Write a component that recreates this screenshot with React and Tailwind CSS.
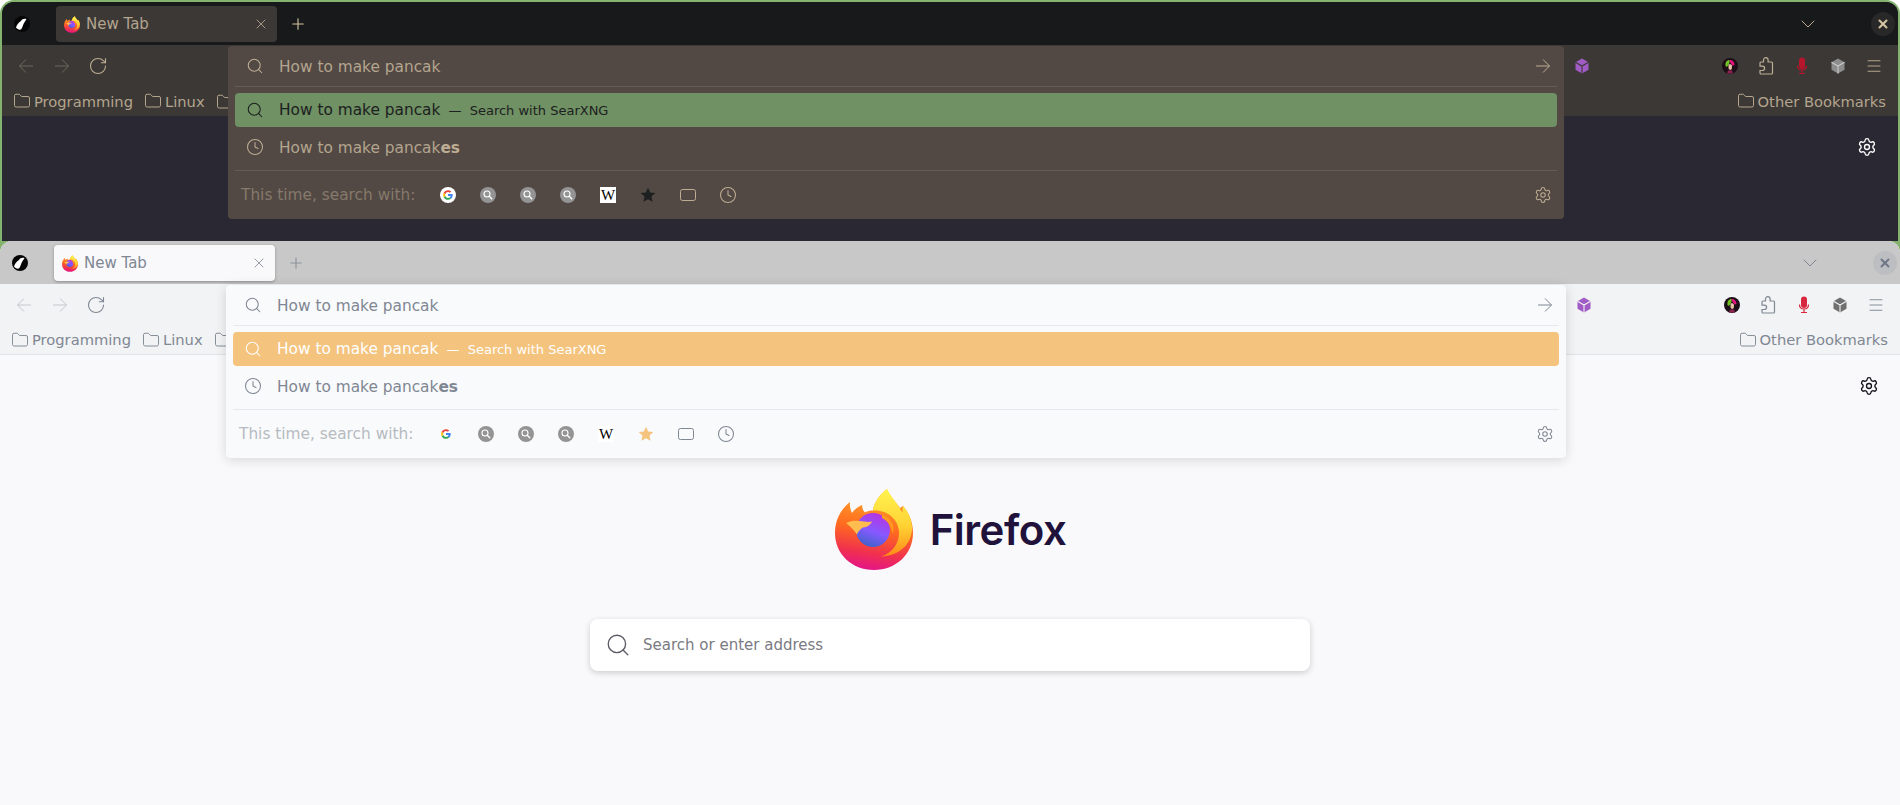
import { ChevronDown, Clock, Folder, Menu, Plus, RotateCw, Search, Settings, X } from "lucide-react";

const darkTheme = {
  dark: true,
  window: "h-[239px] mx-[2px] mt-[2px] bg-[#2a2833]",
  tabBar: "bg-[#18191b]",
  tab: "bg-[#3c3836] text-[#b3a58e]",
  tabIcon: "text-[#bdae93]",
  plus: "text-[#d5c4a1]",
  chevron: "text-[#bdae93]",
  close: "bg-[#282828] text-[#d5c4a1]",
  toolbar: "bg-[#3c3836]",
  navDim: "text-[#6e665c]",
  navIcon: "text-[#bdae93]",
  bookmark: "text-[#b3a58e]",
  bookmarkIcon: "text-[#bdae93]",
  bookmarkBar: "",
  gear: "text-white",
  panel: "bg-[#524844]",
  sep: "bg-[#665c54]",
  text: "text-[#b3a58e]",
  strong: "text-[#bdae93]",
  icon: "text-[#bdae93]",
  selected: "bg-[#6f9163] text-[#1d2021]",
  selectedIcon: "text-[#1d2021]",
  footer: "text-[#857a6b]",
  star: "#1d2021",
  puzzle: "text-[#bdae93]",
  cube: { fill: "#8d8d8d", line: "#c9c9c9" },
  mic: "#b5162c",
};

const lightTheme = {
  dark: false,
  window: "h-[564px] bg-[#f9f9fb]",
  tabBar: "bg-[#c8c8c8]",
  tab: "bg-[#f9f9fb] text-[#7f8793] shadow-[0_1px_3px_rgba(0,0,0,0.3)]",
  tabIcon: "text-[#7f8793]",
  plus: "text-[#8b929c]",
  chevron: "text-[#7f8793]",
  close: "bg-[#bcbec2] text-[#6f7988]",
  toolbar: "bg-[#f2f3f5]",
  navDim: "text-[#c3c7cd]",
  navIcon: "text-[#7f8793]",
  bookmark: "text-[#7f8793]",
  bookmarkIcon: "text-[#7f8793]",
  bookmarkBar: "border-b border-[#e1e3e6]",
  gear: "text-[#15141a]",
  panel: "bg-[#f9fafc] shadow-[0_2px_12px_rgba(0,0,0,0.14)]",
  sep: "bg-[#e6e8eb]",
  text: "text-[#7f8793]",
  strong: "text-[#7f8793]",
  icon: "text-[#7f8793]",
  selected: "bg-[#f4c37d] text-white",
  selectedIcon: "text-white",
  footer: "text-[#b6bac1]",
  star: "#f4c37d",
  puzzle: "text-[#7f8793]",
  cube: { fill: "#6f6f6f", line: "#f2f3f5" },
  mic: "#d7263d",
};

function Arrow({ left, className }) {
  return (
    <svg width="16" height="16" viewBox="0 0 16 16" fill="none" stroke="currentColor" strokeWidth="1" className={className}>
      {left ? <path d="M15 8H1.5M8 1.5 1.5 8 8 14.5" /> : <path d="M1 8h13.5M8 1.5 14.5 8 8 14.5" />}
    </svg>
  );
}

function Penguin() {
  return (
    <svg width="16" height="16" viewBox="0 0 16 16" className="shrink-0">
      <circle cx="8" cy="8" r="8" fill="#050505" />
      <path d="M12.500 3.200C10.500 2.400 8 3 7 5 4.500 6.500 2.500 9 2 11.500c1 1.500 3 2.500 5 2 1.500-2 2-4.500 3-6.500.7-1.200 1.500-2.500 2.500-3.800Z" fill="#fff" />
    </svg>
  );
}

function FirefoxMark({ id, size, height }) {
  return (
    <svg width={size} height={height} viewBox="0 0 78 81" className="shrink-0">
      <defs>
        <linearGradient id={`${id}body`} x1="0.6" y1="0" x2="0.45" y2="1">
          <stop offset="0" stopColor="#ffb02e" />
          <stop offset="0.5" stopColor="#ff6a1f" />
          <stop offset="0.8" stopColor="#f0304f" />
          <stop offset="1" stopColor="#e31587" />
        </linearGradient>
        <linearGradient id={`${id}flame`} x1="0.5" y1="0" x2="0.5" y2="1">
          <stop offset="0" stopColor="#fff44f" />
          <stop offset="0.55" stopColor="#ffd234" />
          <stop offset="1" stopColor="#ff8a16" />
        </linearGradient>
        <linearGradient id={`${id}globe`} x1="0.7" y1="0" x2="0.35" y2="1">
          <stop offset="0" stopColor="#b833e1" />
          <stop offset="0.55" stopColor="#8659ff" />
          <stop offset="1" stopColor="#3f62c9" />
        </linearGradient>
      </defs>
      <path d="M15 13c-.5 4 .2 7.500 2 11 2.500-3.500 5.800-6.300 10-8 .2 3 1 5.500 3 7.500 2.500-1.500 5-2 8-2C39 14 44 6 52 0c2 7 8 12 13 19l3-2c6 7 10 16 10 27 0 21-17 37-39 37S0 65 0 44C0 31 6 20 15 13Z" fill={`url(#${id}body)`} />
      <path d="M52 0C44 6 39 14 38 21.500c14-1 25 8 26 21 .6 11-6 21-18 25 17-.5 30-11 31-27 .4-9-3.500-17-9-23.500l-.7 7C63 14.500 56 8 52 0Z" fill={`url(#${id}flame)`} />
      <circle cx="38" cy="41" r="17" fill={`url(#${id}globe)`} />
      <path d="M11 34c6-3 12-2.500 18-1.500 3 .5 6 .5 8 0-2 4-5 5.500-9 6-2.500 1.500-5 4-6 7C19 41 15 37 11 34Z" fill="#ffbd4f" />
      <path d="M47 26c5 1 9 5 11 10 .6 3 .6 6 0 9-1.500-7-5-13-11-16v-3Z" fill="#ff9a1f" />
    </svg>
  );
}

function CubeIcon({ fill, line }) {
  return (
    <svg width="16" height="16" viewBox="0 0 16 16" className="shrink-0">
      <path d="M8 .5 14.500 4.200v7.600L8 15.500 1.500 11.800V4.200Z" fill={fill} />
      <path d="M1.500 4.200 8 8l6.500-3.800M8 8v7.500" fill="none" stroke={line} strokeWidth="1.100" />
    </svg>
  );
}

function PuzzleIcon({ className }) {
  return (
    <svg width="16" height="18" viewBox="0 0 16 18" fill="none" stroke="currentColor" strokeWidth="1.200" className={`shrink-0 ${className}`}>
      <path d="M5.500 5V3a2.300 2.300 0 0 1 4.600 0v2h3.400a1 1 0 0 1 1 1v10a1 1 0 0 1-1 1H3a1 1 0 0 1-1-1v-2.500h2.400a2.200 2.200 0 0 0 0-4.400H2V6a1 1 0 0 1 1-1Z" />
    </svg>
  );
}

function Avatar() {
  return (
    <svg width="16" height="18" viewBox="0 0 16 18" className="shrink-0">
      <circle cx="8" cy="9" r="8" fill="#1d0f18" />
      <path d="M3.500 9C3 5 5 3 7.500 3c.5 1.500 0 3.500-1.200 5L5 10Z" fill="#6ec21f" />
      <path d="M7.500 3c3 0 5 2 5 5l-2 .5c-1-1.500-2.500-3-3-5.500Z" fill="#e6127d" />
      <path d="M6.500 7.500c1.500-.5 3 0 3.500 1l-.2 3.500-1.800 1.300-1.500-1.800Z" fill="#e9bfa6" />
      <path d="M6 13.500h4l1 3H5Z" fill="#8c2350" />
    </svg>
  );
}

function MicIcon({ color }) {
  return (
    <svg width="16" height="18" viewBox="0 0 16 18" className="shrink-0">
      <rect x="5" y="0.500" width="6" height="11.500" rx="3" fill={color} />
      <path d="M3.500 8.500C3.500 11.500 5.500 13 8 13s4.500-1.500 4.500-4.500M8 13v3M5 16.500h6" fill="none" stroke={color} strokeWidth="1.200" />
    </svg>
  );
}

function GoogleIcon({ dark }) {
  return (
    <svg width="16" height="16" viewBox="0 0 16 16" className="shrink-0">
      {dark && <circle cx="8" cy="8" r="8" fill="#fff" />}
      <path d="M12.700 8.100c0-.3 0-.7-.1-1H8v1.900h2.600c-.1.600-.5 1.200-1 1.500l1.600 1.200c1-.9 1.500-2.200 1.500-3.600Z" fill="#4285f4" />
      <path d="M8 12.800c1.300 0 2.400-.4 3.200-1.200l-1.600-1.200c-.4.300-1 .5-1.600.5-1.200 0-2.300-.8-2.700-2l-1.600 1.300c.8 1.600 2.400 2.600 4.300 2.600Z" fill="#34a853" />
      <path d="M5.300 8.900c-.2-.6-.2-1.300 0-1.800L3.700 5.800c-.7 1.400-.7 3 0 4.400Z" fill="#fbbc05" />
      <path d="M8 5.100c.7 0 1.300.2 1.800.7l1.400-1.400C10.300 3.600 9.200 3.200 8 3.200c-1.900 0-3.500 1-4.300 2.600l1.600 1.300c.4-1.200 1.500-2 2.700-2Z" fill="#ea4335" />
    </svg>
  );
}

function EngineIcon() {
  return (
    <svg width="16" height="16" viewBox="0 0 16 16" className="shrink-0">
      <circle cx="8" cy="8" r="8" fill="#949494" />
      <circle cx="7" cy="7" r="3" fill="none" stroke="#fff" strokeWidth="1.100" />
      <path d="m9.300 9.300 2.900 2.900" stroke="#fff" strokeWidth="1.300" />
    </svg>
  );
}

function WikiIcon() {
  return (
    <span className="flex h-4 w-4 shrink-0 items-center justify-center bg-white font-['Liberation_Serif',serif] text-[15px] leading-none text-black">
      W
    </span>
  );
}

function Dropdown({ t }) {
  return (
    <div className={`absolute left-[226px] right-[334px] top-[44px] z-10 flex h-[173px] flex-col rounded-[4px] px-[7px] ${t.panel}`}>
      <div className={`flex h-10 shrink-0 items-center gap-[15px] pl-[11px] pr-[6px] text-[15.36px] ${t.text}`}>
        <Search size={18} strokeWidth={1.4} className={t.icon} />
        <span className="pt-1">How to make pancak</span>
        <Arrow className={`ml-auto ${t.icon}`} />
      </div>
      <div className={`h-px shrink-0 ${t.sep}`} />
      <div className={`mt-[6px] flex h-[34px] shrink-0 items-center gap-[15px] rounded-[4px] pl-[11px] text-[15.36px] ${t.selected}`}>
        <Search size={18} strokeWidth={1.4} className={t.selectedIcon} />
        <span className="pt-px">How to make pancak</span>
        <span className="-ml-[7px] pt-px text-[13px]">— &nbsp;Search with SearXNG</span>
      </div>
      <div className={`mt-[3px] flex h-[34px] shrink-0 items-center gap-[15px] pl-[11px] text-[15.36px] ${t.text}`}>
        <Clock size={18} strokeWidth={1.4} className={t.icon} />
        <span className="pt-[3px]">
          How to make pancak<b className={`font-bold ${t.strong}`}>es</b>
        </span>
      </div>
      <div className={`mt-[6px] h-px shrink-0 ${t.sep}`} />
      <div className="flex flex-1 items-center pl-[6px] pr-[6px]">
        <span className={`w-[199px] shrink-0 pt-px text-[15.36px] ${t.footer}`}>This time, search with:</span>
        <div className="flex items-center gap-6">
          <GoogleIcon dark={t.dark} />
          <EngineIcon />
          <EngineIcon />
          <EngineIcon />
          <WikiIcon />
          <svg width="16" height="16" viewBox="0 0 16 16" className="shrink-0">
            <path d="m8 .8 2.200 4.700 5.100.6-3.800 3.500 1 5.100L8 12.200l-4.500 2.500 1-5.100L.7 6.100l5.100-.6Z" fill={t.star} />
          </svg>
          <svg width="16" height="16" viewBox="0 0 16 16" fill="none" stroke="currentColor" strokeWidth="1" className={`shrink-0 ${t.icon}`}>
            <rect x="0.500" y="2.500" width="15" height="11" rx="2" />
          </svg>
          <Clock size={18} strokeWidth={1.4} className={`-mx-px shrink-0 ${t.icon}`} />
        </div>
        <Settings size={18} strokeWidth={1.4} className={`-mr-px ml-auto ${t.icon}`} />
      </div>
    </div>
  );
}

function Bookmark({ t, label }) {
  return (
    <div className="flex items-center gap-[3px]">
      <Folder size={18} strokeWidth={1.25} className={t.bookmarkIcon} />
      {label && <span className={`pt-px ${t.bookmark}`}>{label}</span>}
    </div>
  );
}

function BrowserWindow({ t, children }) {
  return (
    <div className={`relative flex flex-col overflow-hidden rounded-t-[12px] ${t.window}`}>
      <div className={`flex h-[43px] shrink-0 items-center pl-3 pr-[3px] ${t.tabBar}`}>
        <Penguin />
        <div className={`ml-[26px] mt-px flex h-9 w-[221px] items-center gap-[6px] rounded-[4px] pl-2 pr-2 text-[15px] ${t.tab}`}>
          <FirefoxMark id={t.dark ? "tabd" : "tabl"} size={16} height={17} />
          <span>New Tab</span>
          <X size={16} strokeWidth={1.25} className={`ml-auto ${t.tabIcon}`} />
        </div>
        <Plus size={18} strokeWidth={1.5} className={`ml-3 ${t.plus}`} />
        <ChevronDown size={24} strokeWidth={1} className={`ml-auto ${t.chevron}`} />
        <div className={`ml-[51px] flex h-6 w-6 items-center justify-center rounded-full ${t.close}`}>
          <X size={14} strokeWidth={3.5} />
        </div>
      </div>
      <div className={`flex h-[42px] shrink-0 items-center gap-5 pl-4 pr-4 ${t.toolbar}`}>
        <Arrow left className={t.navDim} />
        <Arrow className={t.navDim} />
        <RotateCw size={20} strokeWidth={1.3} className={`-mx-[2px] ${t.navIcon}`} />
        <div className="ml-auto mr-[112px]">
          <CubeIcon fill="#a05bc4" line={t.dark ? "#3c3836" : "#f2f3f5"} />
        </div>
        <Avatar />
        <PuzzleIcon className={t.puzzle} />
        <MicIcon color={t.mic} />
        <CubeIcon fill={t.cube.fill} line={t.cube.line} />
        <Menu size={18} strokeWidth={1.25} className={`-mx-px ${t.navIcon}`} />
      </div>
      <div className={`flex h-[29px] shrink-0 items-center gap-[11px] pl-[11px] pr-3 text-[14.7px] ${t.toolbar} ${t.bookmarkBar}`}>
        <Bookmark t={t} label="Programming" />
        <Bookmark t={t} label="Linux" />
        <Bookmark t={t} />
        <div className="ml-auto">
          <Bookmark t={t} label="Other Bookmarks" />
        </div>
      </div>
      <Dropdown t={t} />
      <div className="flex flex-1 flex-col">
        <div className={`flex justify-end pr-[21px] pt-[21px] ${t.gear}`}>
          <Settings size={20} strokeWidth={1.6} />
        </div>
        {children}
      </div>
    </div>
  );
}

export default function App() {
  return (
    <div className="h-[805px] w-full overflow-hidden rounded-t-[14px] bg-[#83b36e] font-['DejaVu_Sans',sans-serif]">
      <BrowserWindow t={darkTheme} />
      <BrowserWindow t={lightTheme}>
        <div className="mt-[93px] flex items-center justify-center gap-[17px] pl-px">
          <FirefoxMark id="logo" size={78} height={81} />
          <span className="pt-px font-['Inter',sans-serif] text-[42px] font-semibold leading-none tracking-[-0.5px] text-[#20123a]">
            Firefox
          </span>
        </div>
        <div className="mx-auto mt-[49px] flex h-[52px] w-[720px] items-center gap-3 rounded-lg bg-white pl-[15px] shadow-[0_2px_6px_rgba(0,0,0,0.18)]">
          <Search size={26} strokeWidth={1.25} className="text-[#5b5b66]" />
          <span className="text-[15px] text-[#7a7a82]">Search or enter address</span>
        </div>
      </BrowserWindow>
    </div>
  );
}
